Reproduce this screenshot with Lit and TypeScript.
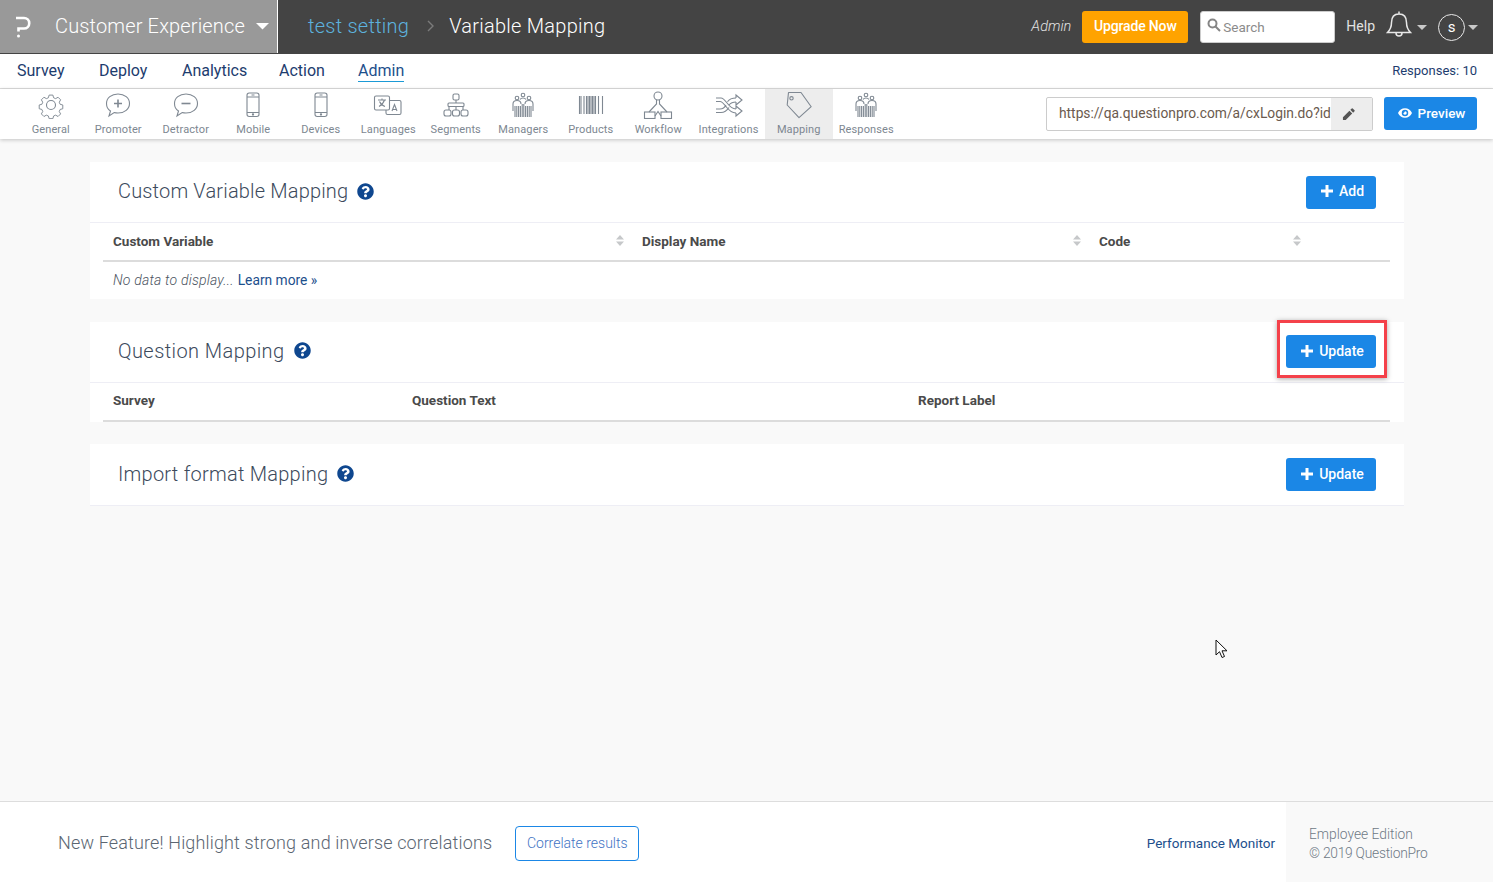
import { LitElement, html, css, svg } from 'lit'
import { customElement } from 'lit/decorators.js'

const QUESTION = 'M504 256c0 136.997-111.043 248-248 248S8 392.997 8 256C8 119.083 119.043 8 256 8s248 111.083 248 248zM262.655 90c-54.497 0-89.255 22.957-116.549 63.758-3.536 5.286-2.353 12.415 2.715 16.258l34.699 26.31c5.205 3.947 12.621 3.008 16.665-2.122 17.864-22.658 30.113-35.797 57.303-35.797 20.429 0 45.698 13.148 45.698 32.958 0 14.976-12.363 22.667-32.534 33.976C247.128 238.528 216 254.941 216 296v4c0 6.627 5.373 12 12 12h56c6.627 0 12-5.373 12-12v-1.333c0-28.462 83.186-29.647 83.186-106.667 0-58.002-60.165-102-116.531-102zM256 338c-25.365 0-46 20.635-46 46 0 25.364 20.635 46 46 46s46-20.636 46-46c0-25.365-20.635-46-46-46z'

const people = svg`
  <circle cx="15" cy="4" r="1.800"/><circle cx="9" cy="7" r="1.800"/><circle cx="21" cy="7" r="1.800"/>
  <path d="M5 20v-7q0-3.500 4-3.500t4 3.500M17 13q0-3.500 4-3.500t4 3.500v7M12 8.500q1-1.500 3-1.500t3 1.500"/>
  <path d="M7 15v11M8.800 15v11M10.600 15v11M12.400 15v11M14.200 13v13M15.800 13v13M17.600 15v11M19.400 15v11M21.200 15v11M23 15v11"/>`

const phone = svg`
  <rect x="9" y="2" width="12" height="23.500" rx="2.200"/>
  <path d="M9 6h12M9 21.500h12M13.500 4h3"/><circle cx="15" cy="23.500" r=".6"/>`

const bubble = 'M15 3c6.500 0 11.500 4 11.500 9.500S21.500 22 15 22c-1.500 0-2.500-.1-3.800-.5L6 25l1.500-5C5 18.500 3.500 15.500 3.500 12.500 3.500 7 8.500 3 15 3z'

const TOOLS = [
  {
    label: 'General',
    icon: svg`<circle cx="15" cy="14" r="4.500"/>
      <path d="M12.800 1.500h4.400l.8 3.100 2.400 1 2.800-1.600 3 3-1.600 2.800 1 2.400 3.100.8v4.400l-3.100.8-1 2.400 1.600 2.800-3 3-2.800-1.600-2.400 1-.8 3.100h-4.400l-.8-3.100-2.400-1-2.800 1.600-3-3 1.600-2.800-1-2.400-3.100-.8v-4.400l3.100-.8 1-2.400-1.600-2.800 3-3 2.800 1.600 2.400-1z" transform="translate(2.100 2.800) scale(.86)"/>`
  },
  {
    label: 'Promoter',
    icon: svg`<path d=${bubble}/><path d="M15 8.500v8M11 12.500h8" stroke-width="1.600"/>`
  },
  {
    label: 'Detractor',
    icon: svg`<path d=${bubble}/><path d="M10.500 12.500h9" stroke-width="1.600"/>`
  },
  { label: 'Mobile', icon: phone },
  { label: 'Devices', icon: phone },
  {
    label: 'Languages',
    icon: svg`<rect x="1.500" y="5" width="15" height="14" rx="1.500"/><path d="M16.500 9.500h10q1.500 0 1.500 1.500v11q0 1.500-1.500 1.500h-12q-1.500 0-1.500-1.500v-3"/>
      <path d="M5 9h8M9 7.500v1.500M6 15.500q4-2 5.500-6.500M6.500 10.500q2 4 5.500 5M19 20l2.500-6.500 2.500 6.500M20 18.500h3"/>`
  },
  {
    label: 'Segments',
    icon: svg`<rect x="12" y="3" width="6" height="6" rx="1.500"/><rect x="7" y="12" width="16" height="3.500" rx="1"/>
      <path d="M15 9v3M8 15.500v3.500M15 15.500v3.500M22 15.500v3.500"/>
      <rect x="3" y="19" width="7" height="6" rx="2"/><rect x="11.500" y="19" width="7" height="6" rx="2"/><rect x="20" y="19" width="7" height="6" rx="2"/>`
  },
  { label: 'Managers', icon: people },
  {
    label: 'Products',
    icon: svg`<path d="M3.500 5v18M5 5v18M8 5v18M10.500 5v18M12 5v18M13.500 5v18M15 5v18M16.500 5v18M18 5v18M19.500 5v18M22.500 5v18M26.500 5v18"/>`
  },
  {
    label: 'Workflow',
    icon: svg`<circle cx="15" cy="5" r="4"/><path d="M13.500 8.700v4.300L6 21M16.500 8.700v4.300L24 21M12 25l3-4.500 3 4.500"/>
      <rect x="1.500" y="21" width="10.500" height="6.500"/><rect x="18" y="21" width="10.500" height="6.500"/>`
  },
  {
    label: 'Integrations',
    icon: svg`<path d="M2 7h5c5 0 7 11 15 11M2 10.500h4c5 0 7 11.500 16 11.500M2 18h4c3 0 5-2 6-4M2 21.500h5c3.500 0 6-2 8-5M22 11c-3.500 0-5.500 1.200-7 3M22 7c-4.500 0-7 1.500-8.500 3.700"/>
      <path d="M22 7V4l6 5-6 5v-3M22 18v-3l6 5-6 5v-3"/>`
  },
  {
    label: 'Mapping',
    active: true,
    icon: svg`<path d="M4.500 1.500H17L27.200 15.700 15 26.700 3.200 14z" stroke-linejoin="round"/><circle cx="7.500" cy="7.300" r="1.700"/>`
  },
  { label: 'Responses', icon: people }
]

const NAV = ['Survey', 'Deploy', 'Analytics', 'Action', 'Admin']

const sortIcon = html`<svg class="sort" viewBox="0 0 8 11" width="8" height="11"><path d="M4 0l4 4.500H0zM4 11L0 6.500h8z" fill="#c6c8ca"/></svg>`
const plusIcon = html`<svg viewBox="0 0 12 12" width="12" height="12"><path d="M6 0v12M0 6h12" stroke="#fff" stroke-width="3"/></svg>`

@customElement('app-root')
export class AppRoot extends LitElement {
  static styles = css`
    :host {
      display: flex;
      flex-direction: column;
      min-height: 882px;
      position: relative;
      font-family: Roboto, 'Noto Sans', sans-serif;
      background: #f9f9f9;
      color: #444;
    }

    .top {
      display: flex;
      align-items: center;
      height: 54px;
      background: #444;
      color: #fff;
    }
    .brand {
      display: flex;
      align-items: center;
      width: 277px;
      height: 53px;
      margin-bottom: 1px;
      background: #999;
      border-right: 1px solid #fff;
      font-size: 20px;
      font-weight: 300;
      letter-spacing: 0.15px;
      color: #fff;
      flex: none;
    }
    .brand .logo { margin: 0 24px 0 15px; }
    .brand span { padding-bottom: 2px; }
    .brand .caret { margin-left: 11px; }
    .crumbs {
      display: flex;
      align-items: center;
      padding: 0 0 2px 30px;
      font-size: 20px;
      font-weight: 300;
      letter-spacing: 0.25px;
    }
    .crumbs .link { color: #5db2de; }
    .crumbs svg { margin: 0 15px 0 18px; }
    .top-right {
      display: flex;
      align-items: center;
      margin-left: auto;
      padding-right: 15px;
      font-size: 14px;
      color: #e2e2e2;
    }
    .who { font-style: italic; margin-right: 11px; font-weight: 300; font-size: 14.500px; padding-bottom: 2px; }
    .upgrade {
      width: 106px;
      height: 32px;
      box-sizing: border-box;
      padding-bottom: 2px;
      display: flex;
      align-items: center;
      justify-content: center;
      background: #ffa300;
      border-radius: 3px;
      color: #fff;
      font-weight: 500;
      font-size: 14px;
      letter-spacing: -0.15px;
      margin-right: 12px;
    }
    .search {
      width: 135px;
      height: 32px;
      box-sizing: border-box;
      display: flex;
      align-items: center;
      gap: 2px;
      padding: 0 0 1px 6px;
      background: #fff;
      border: 1px solid #ccc;
      border-radius: 3px;
      color: #8b8b8b;
      font-size: 13.500px;
      margin-right: 11px;
    }
    .search svg { margin-bottom: 3px; }
    .help { margin-right: 11px; font-size: 14px; padding-bottom: 2px; }
    .bell { margin: 0 5px 6px 0; }
    .caret-s { margin-right: 11px; }
    .avatar {
      width: 27px;
      height: 27px;
      box-sizing: border-box;
      border: 1px solid #e8e8e8;
      border-radius: 50%;
      display: flex;
      align-items: center;
      justify-content: center;
      font-size: 15px;
      color: #fff;
      margin-right: 3px;
    }

    .nav {
      display: grid;
      grid-template-columns: 82px 83px 97px 79px auto 1fr;
      align-items: center;
      height: 34px;
      padding: 0 16px 2px 17px;
      box-sizing: content-box;
      height: 32px;
      background: #fff;
      border-bottom: 1px solid #ddd;
      font-size: 16px;
      color: #1d3c6e;
    }
    .nav a { padding-bottom: 1px; }
    .nav a.on { border-bottom: 1px solid #1b9ad6; color: #1d4f8c; }
    .nav .resp { justify-self: end; font-size: 13px; color: #1d3c6e; }

    .tools {
      display: flex;
      align-items: stretch;
      height: 50px;
      padding-left: 17px;
      padding-right: 16px;
      background: #fff;
      box-shadow: 0 1px 4px rgba(0, 0, 0, 0.22);
      position: relative;
    }
    .tool {
      width: 67.500px;
      flex: none;
      display: flex;
      flex-direction: column;
      align-items: center;
      font-size: 11px;
      letter-spacing: 0.12px;
      color: #7d8791;
    }
    .tool.wide { width: 73px; }
    .tool.active { background: #ededed; }
    .tool svg {
      margin-top: 2px;
      height: 28px;
      fill: none;
      stroke: #7f8892;
      stroke-width: 1.100;
    }
    .tool span { margin-top: 4px; line-height: 14px; white-space: nowrap; }
    .url {
      margin-left: auto;
      margin-top: 8px;
      align-self: flex-start;
      width: 327px;
      height: 34px;
      box-sizing: border-box;
      display: flex;
      align-items: stretch;
      border: 1px solid #ccc;
      border-radius: 2px;
      font-size: 13.800px;
      color: #6b5a4e;
    }
    .url .val {
      flex: 1;
      display: flex;
      align-items: center;
      padding: 0 0 2px 12px;
      white-space: nowrap;
    }
    .url .edit {
      width: 41px;
      flex: none;
      background: #ededed;
      display: flex;
      align-items: center;
      justify-content: center;
      padding-right: 6px;
      box-sizing: border-box;
    }
    .preview {
      align-self: flex-start;
      margin: 8px 0 0 11px;
      width: 93px;
      height: 33px;
      box-sizing: border-box;
      padding: 0 0 1px 2px;
      background: #1b87e6;
      color: #fff;
      border-radius: 3px;
      display: flex;
      align-items: center;
      justify-content: center;
      gap: 6px;
      font-size: 13.500px;
      font-weight: 500;
    }

    main {
      flex: 1;
      display: flex;
      flex-direction: column;
      gap: 22.500px;
      padding: 23px 89px 0 90px;
    }
    .card { background: #fff; }
    .card-head {
      height: 60px;
      display: flex;
      align-items: center;
      padding: 0 28px;
      border-bottom: 1px solid #eeeef5;
    }
    .card-head.tall { height: 61px; }
    .card-head h2 {
      margin: 0 0 2px;
      font-size: 20px;
      font-weight: 300;
      color: #3c4a5c;
    }
    .card-head h2.custom { letter-spacing: 0.17px; }
    .card-head h2.question { letter-spacing: 0.42px; }
    .card-head h2.import { letter-spacing: 0.25px; }
    .card-head .q { margin: 0 0 2px 9px; }
    .btn {
      margin-left: auto;
      height: 33px;
      box-sizing: border-box;
      padding: 0 0 2px 3px;
      display: flex;
      align-items: center;
      justify-content: center;
      gap: 6px;
      background: #1b87e6;
      color: #fff;
      border-radius: 3px;
      font-size: 14px;
      font-weight: 500;
    }
    .btn.add { width: 70px; }
    .btn.update { width: 90px; }
    .thead {
      display: grid;
      align-items: center;
      height: 35px;
      padding-bottom: 2px;
      margin: 0 14px 0 13px;
      border-bottom: 2px solid #dcdcdc;
      font-size: 13.500px;
      font-weight: 700;
      color: #4a4a4a;
    }
    .thead.sortable { grid-template-columns: 529px 457px 220px 1fr; }
    .thead.plain { grid-template-columns: 299px 506px 1fr; }
    .th { display: flex; align-items: center; padding-left: 10px; }
    .th .sort { margin-left: auto; margin-right: 8px; }
    .empty {
      padding: 0 10px 2px 23px;
      height: 35px;
      display: flex;
      align-items: center;
      gap: 4px;
      font-size: 14px;
      color: #4a5360;
    }
    .empty i { font-weight: 300; letter-spacing: 0.2px; }
    .empty a { color: #1d4f8c; font-size: 13.800px; }

    footer {
      height: 80px;
      display: flex;
      align-items: center;
      background: #fff;
      border-top: 1px solid #ddd;
    }
    .feature {
      margin: 1px 0 0 58px;
      font-size: 18px;
      font-weight: 300;
      letter-spacing: 0.15px;
      color: #5b6672;
    }
    .correlate {
      margin: 3px 0 0 23px;
      width: 124px;
      height: 35px;
      box-sizing: border-box;
      padding-bottom: 2px;
      display: flex;
      align-items: center;
      justify-content: center;
      border: 1px solid #1b87e6;
      border-radius: 4px;
      font-size: 14px;
      font-weight: 300;
      color: #3f74c4;
    }
    .perf { margin: 1px 11px 0 auto; font-size: 13.500px; color: #1d4f8c; }
    .edition {
      width: 207px;
      height: 80px;
      box-sizing: border-box;
      padding: 23px 0 0 23px;
      background: #f9f9f9;
      font-size: 13.800px;
      line-height: 19px;
      font-weight: 300;
      color: #6f7986;
    }
    .edition span { letter-spacing: -0.25px; }

    .mark {
      position: absolute;
      left: 1277px;
      top: 320px;
      width: 110px;
      height: 58px;
      box-sizing: border-box;
      border: 3px solid #f4414a;
      box-shadow: 0 1px 5px rgba(0, 0, 0, 0.35);
      pointer-events: none;
    }
    .cursor { position: absolute; left: 1215px; top: 639px; }
  `

  private helpIcon() {
    return html`<svg class="q" viewBox="0 0 512 512" width="17" height="17"><path d=${QUESTION} fill="#0f478f"/></svg>`
  }

  private caret(w: number, color: string, cls = '') {
    return html`<svg class=${cls} viewBox="0 0 12 6" width=${w} height=${w / 2}><path d="M0 0h12L6 6z" fill=${color}/></svg>`
  }

  render() {
    return html`
      <div class="top">
        <div class="brand">
          <svg class="logo" viewBox="0 0 16 22" width="16" height="22" fill="none" stroke="#fff" stroke-width="2.600">
            <path d="M1 2h8a4.800 4.800 0 0 1 0 10.500H3.500v3"/><circle cx="3.500" cy="20" r="1.500" fill="#fff" stroke="none"/>
          </svg>
          <span>Customer Experience</span>
          ${this.caret(13, '#fff', 'caret')}
        </div>
        <div class="crumbs">
          <span class="link">test setting</span>
          <svg viewBox="0 0 7 12" width="7" height="12" fill="none" stroke="#7b7b7b" stroke-width="1.400"><path d="M1 1l5 5-5 5"/></svg>
          <span>Variable Mapping</span>
        </div>
        <div class="top-right">
          <span class="who">Admin</span>
          <div class="upgrade">Upgrade Now</div>
          <div class="search">
            <svg viewBox="0 0 14 14" width="14" height="14" fill="none" stroke="#858585" stroke-width="2"><circle cx="5.500" cy="5.500" r="4"/><path d="M8.500 8.500l4.500 4.500"/></svg>
            <span>Search</span>
          </div>
          <span class="help">Help</span>
          <svg class="bell" viewBox="0 0 26 28" width="26" height="28" fill="none" stroke="#e8e8e8" stroke-width="1.500">
            <path d="M13 4c-5 0-7.500 3.500-7.500 8.500 0 5-1.500 7.500-4 10h23c-2.500-2.500-4-5-4-10C20.500 7.500 18 4 13 4zM13 4V1.500M10 23a3 3 0 0 0 6 0"/>
          </svg>
          ${this.caret(10, '#c9c9c9', 'caret-s')}
          <div class="avatar">s</div>
          ${this.caret(10, '#c9c9c9')}
        </div>
      </div>

      <div class="nav">
        ${NAV.map(n => html`<div><a class=${n === 'Admin' ? 'on' : ''}>${n}</a></div>`)}
        <span class="resp">Responses: 10</span>
      </div>

      <div class="tools">
        ${TOOLS.map(t => html`
          <div class="tool ${t.active ? 'active' : ''} ${t.label === 'Integrations' ? 'wide' : ''}">
            <svg viewBox="0 0 30 28" width="30" height="28">${t.icon}</svg>
            <span>${t.label}</span>
          </div>`)}
        <div class="url">
          <div class="val">https://qa.questionpro.com/a/cxLogin.do?id</div>
          <div class="edit">
            <svg viewBox="0 0 14 14" width="13" height="13"><path d="M1 10l7-7 3 3-7 7H1zM9 2l1.500-1.500q.5-.5 1 0l2 2q.5.5 0 1L12 5z" fill="#555"/></svg>
          </div>
        </div>
        <div class="preview">
          <svg viewBox="0 0 16 11" width="14" height="10"><path d="M8 0c3.500 0 6.500 2.200 8 5.500C14.500 8.800 11.500 11 8 11S1.500 8.800 0 5.500C1.500 2.200 4.500 0 8 0zm0 1.800a3.700 3.700 0 1 0 0 7.400 3.700 3.700 0 0 0 0-7.400zM8 3.500a2 2 0 1 1-2 2q1 .5 2-2z" fill="#fff" fill-rule="evenodd"/></svg>
          Preview
        </div>
      </div>

      <main>
        <section class="card">
          <div class="card-head">
            <h2 class="custom">Custom Variable Mapping</h2>${this.helpIcon()}
            <div class="btn add">${plusIcon}Add</div>
          </div>
          <div class="thead sortable">
            <div class="th">Custom Variable${sortIcon}</div>
            <div class="th">Display Name${sortIcon}</div>
            <div class="th">Code${sortIcon}</div>
          </div>
          <div class="empty"><i>No data to display...</i><a>Learn more »</a></div>
        </section>

        <section class="card">
          <div class="card-head">
            <h2 class="question">Question Mapping</h2>${this.helpIcon()}
            <div class="btn update">${plusIcon}Update</div>
          </div>
          <div class="thead plain">
            <div class="th">Survey</div>
            <div class="th">Question Text</div>
            <div class="th">Report Label</div>
          </div>
        </section>

        <section class="card">
          <div class="card-head tall">
            <h2 class="import">Import format Mapping</h2>${this.helpIcon()}
            <div class="btn update">${plusIcon}Update</div>
          </div>
        </section>
      </main>

      <footer>
        <span class="feature">New Feature! Highlight strong and inverse correlations</span>
        <div class="correlate">Correlate results</div>
        <span class="perf">Performance Monitor</span>
        <div class="edition">Employee Edition<br /><span>© 2019 QuestionPro</span></div>
      </footer>

      <div class="mark"></div>
      <svg class="cursor" viewBox="0 0 13 20" width="13" height="20"><path d="M1 1v15l3.500-3.300 2.500 5.800 2.500-1-2.500-5.700h5z" fill="#fff" stroke="#111" stroke-width="1"/></svg>
    `
  }
}
